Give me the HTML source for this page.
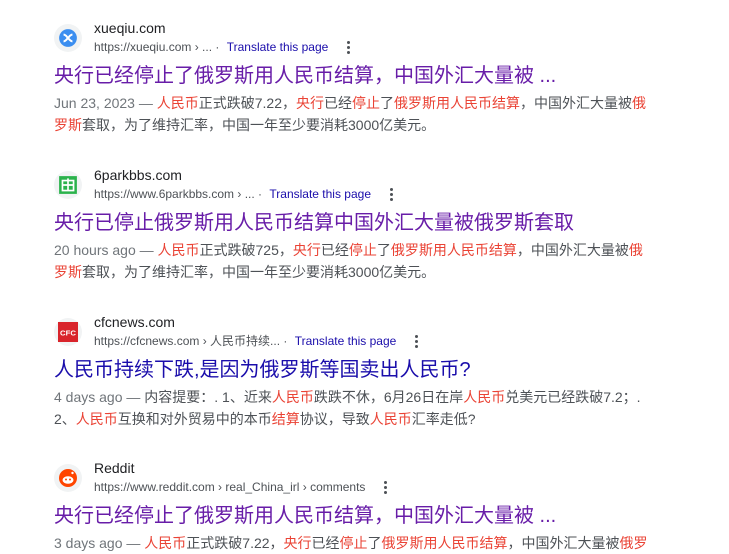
<!DOCTYPE html><html><head><meta charset="utf-8"><style>
body{margin:0;width:729px;height:554px;background:#fff;overflow:hidden;font-family:"Liberation Sans","Noto Sans CJK SC",sans-serif;position:relative}
.r{position:absolute;left:54px;width:680px}
.fav{position:absolute;left:0;top:0;width:28px;height:28px;border-radius:50%;background:#f1f3f4;display:flex;align-items:center;justify-content:center}
.site{position:absolute;left:40px;top:0;font-size:14px;color:#202124;line-height:20px}
.url{position:absolute;left:40px;top:20px;font-size:12px;color:#4d5156;line-height:18px;white-space:nowrap}
.url .t{color:#1a0dab;margin-left:4px}
.dots{display:inline-block;margin-left:19px;vertical-align:middle;width:3px}
.dots i{display:block;width:3px;height:3px;background:#4d5156;border-radius:50%;margin:2px 0}
.ti{position:absolute;left:0;top:44px;font-size:20px;line-height:26px;color:#681da8;white-space:nowrap}
.sn{position:absolute;left:0;top:74px;font-size:14px;line-height:22px;color:#4d5156;white-space:nowrap}
.d{color:#70757a}
.h{color:#ea4335}
</style></head><body>

<div class="r" style="top:24px">
<div class="fav"><svg width="20" height="20" viewBox="0 0 18 18"><circle cx="9" cy="9" r="8" fill="#3b8ef0"/><path d="M5 6c2 0 3 2 4 3s2 3 4 3M13 6c-2 0-3 2-4 3s-2 3-4 3" stroke="#fff" stroke-width="1.8" fill="none"/></svg></div>
<div class="site" style="top:-6px">xueqiu.com</div>
<div class="url" style="top:14px">https://xueqiu.com › ... · <span class="t">Translate this page</span><span class="dots"><i></i><i></i><i></i></span></div>
<div class="ti" style="top:39px">央行已经停止了俄罗斯用人民币结算，中国外汇大量被 ...</div>
<div class="sn" style="top:68px"><span class="d">Jun 23, 2023 — </span><span class="h">人民币</span>正式跌破7.22，<span class="h">央行</span>已经<span class="h">停止</span>了<span class="h">俄罗斯用人民币结算</span>，中国外汇大量被<span class="h">俄</span><br><span class="h">罗斯</span>套取，为了维持汇率，中国一年至少要消耗3000亿美元。</div>
</div>

<div class="r" style="top:171px">
<div class="fav"><svg width="20" height="20" viewBox="0 0 18 18"><rect x="1" y="1" width="16" height="16" fill="#2bb24c"/><rect x="4" y="5" width="10" height="9" fill="none" stroke="#fff" stroke-width="1.5"/><path d="M9 3v11M4 9h10" stroke="#fff" stroke-width="1.5"/></svg></div>
<div class="site" style="top:-6px">6parkbbs.com</div>
<div class="url" style="top:14px">https://www.6parkbbs.com › ... · <span class="t">Translate this page</span><span class="dots"><i></i><i></i><i></i></span></div>
<div class="ti" style="top:39px">央行已停止俄罗斯用人民币结算中国外汇大量被俄罗斯套取</div>
<div class="sn" style="top:68px"><span class="d">20 hours ago — </span><span class="h">人民币</span>正式跌破725，<span class="h">央行</span>已经<span class="h">停止</span>了<span class="h">俄罗斯用人民币结算</span>，中国外汇大量被<span class="h">俄</span><br><span class="h">罗斯</span>套取，为了维持汇率，中国一年至少要消耗3000亿美元。</div>
</div>

<div class="r" style="top:318px">
<div class="fav"><svg width="20" height="20" viewBox="0 0 18 18"><rect x="0" y="0" width="18" height="18" fill="#d9242b"/><text x="9" y="12" font-size="7" font-weight="bold" fill="#fff" text-anchor="middle" font-family="Liberation Sans">CFC</text></svg></div>
<div class="site" style="top:-6px">cfcnews.com</div>
<div class="url" style="top:14px">https://cfcnews.com › 人民币持续... · <span class="t">Translate this page</span><span class="dots"><i></i><i></i><i></i></span></div>
<div class="ti" style="top:39px;color:#1a0dab">人民币持续下跌,是因为俄罗斯等国卖出人民币?</div>
<div class="sn" style="top:68px"><span class="d">4 days ago — </span>内容提要：. 1、近来<span class="h">人民币</span>跌跌不休，6月26日在岸<span class="h">人民币</span>兑美元已经跌破7.2；.<br>2、<span class="h">人民币</span>互换和对外贸易中的本币<span class="h">结算</span>协议，导致<span class="h">人民币</span>汇率走低?</div>
</div>

<div class="r" style="top:464px">
<div class="fav"><svg width="20" height="20" viewBox="0 0 20 20"><circle cx="10" cy="10" r="9" fill="#ff4500"/><ellipse cx="10" cy="12" rx="5.5" ry="3.8" fill="#fff"/><circle cx="14.5" cy="5" r="1.2" fill="#fff"/><circle cx="8" cy="11.5" r="1" fill="#ff4500"/><circle cx="12" cy="11.5" r="1" fill="#ff4500"/></svg></div>
<div class="site" style="top:-6px">Reddit</div>
<div class="url" style="top:14px">https://www.reddit.com › real_China_irl › comments<span class="dots"><i></i><i></i><i></i></span></div>
<div class="ti" style="top:39px">央行已经停止了俄罗斯用人民币结算，中国外汇大量被 ...</div>
<div class="sn" style="top:68px"><span class="d">3 days ago — </span><span class="h">人民币</span>正式跌破7.22，<span class="h">央行</span>已经<span class="h">停止</span>了<span class="h">俄罗斯用人民币结算</span>，中国外汇大量被<span class="h">俄罗</span></div>
</div>

</body></html>
